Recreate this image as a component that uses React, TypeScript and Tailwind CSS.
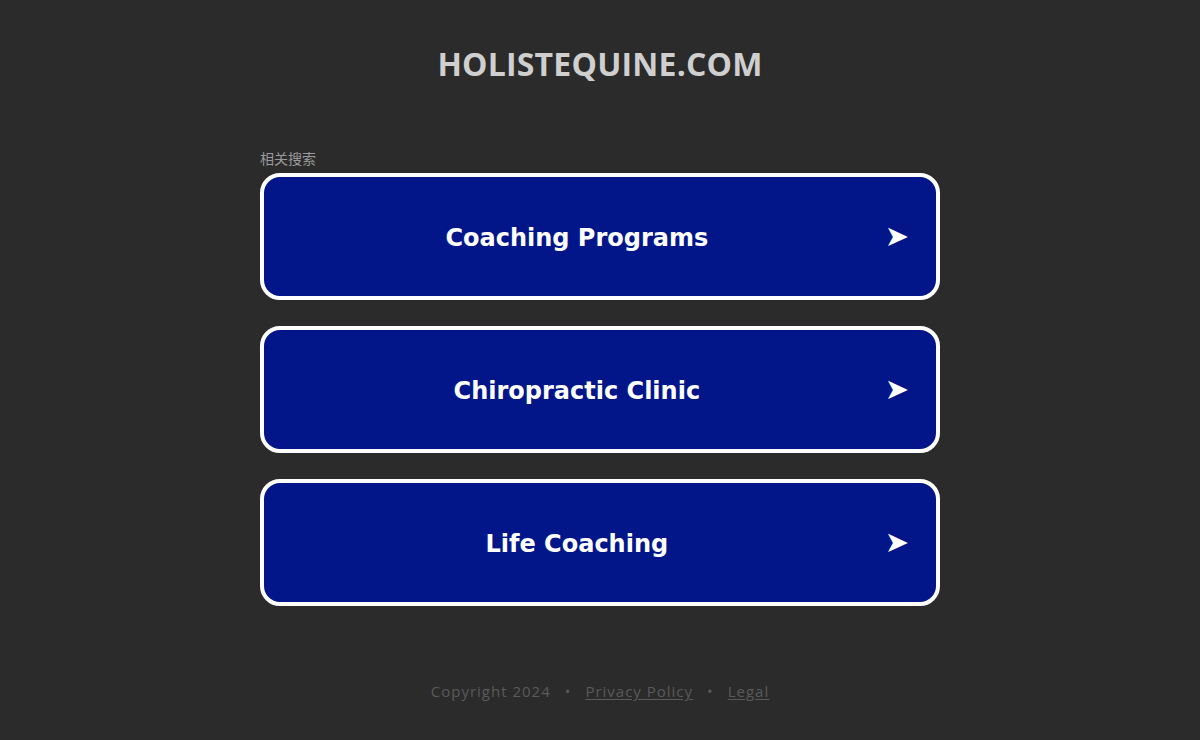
export default function App() {
  const liens = ["Coaching Programs", "Chiropractic Clinic", "Life Coaching"];

  return (
    <div className="min-h-[740px] w-full bg-[#2b2b2b] font-['Open_Sans',sans-serif]">
      <div className="flex flex-col items-center pt-[42px]">
        <h1 className="text-[32px] font-bold leading-[44px] tracking-[0.2px] text-[#cfcfcf]">
          HOLISTEQUINE.COM
        </h1>

        <div className="mt-[63px] w-[680px]">
          <p className="mb-[5px] font-['Noto_Sans_CJK_SC',sans-serif] text-[14px] leading-[19px] text-[#9a9a9a]">
            相关搜索
          </p>
          <div className="flex flex-col gap-[26px]">
            {liens.map((l) => (
              <a
                key={l}
                href="#"
                className="flex h-[127px] items-center rounded-[20px] border-4 border-white bg-[#02168a] text-white"
              >
                <span className="flex-1 pl-[5px] pt-[3px] text-center font-['DejaVu_Sans',Verdana,sans-serif] text-[24px] font-bold">
                  {l}
                </span>
                <span className="pr-[27px] font-['DejaVu_Sans',sans-serif] text-[29px] leading-none">
                  ➤
                </span>
              </a>
            ))}
          </div>
        </div>

        <footer className="mt-[74px] flex items-center gap-[14px] text-[15px] tracking-[1px] text-[#5a5a5a]">
          <span>Copyright 2024</span>
          <span>•</span>
          <a href="#" className="underline underline-offset-2">Privacy Policy</a>
          <span>•</span>
          <a href="#" className="underline underline-offset-2">Legal</a>
        </footer>
      </div>
    </div>
  );
}
